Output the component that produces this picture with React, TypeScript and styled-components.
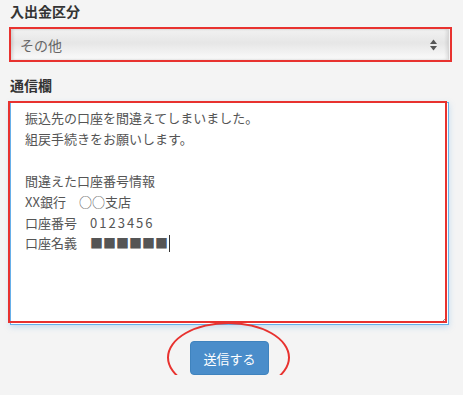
import React from "react";
import styled, { createGlobalStyle } from "styled-components";

const red = "#e8322f";
const font = `"Liberation Sans", Arial, "Noto Sans CJK JP", sans-serif`;
const cjk = `"Noto Sans CJK JP", "Liberation Sans", sans-serif`;

const GlobalStyle = createGlobalStyle`
    html, body {
        margin: 0;
        padding: 0;
        background: #f4f4f4;
    }
    body {
        font-family: ${font};
    }
`;

const Form = styled.form`
    width: 439px;
    padding: 2px 0 0 10px;
`;

const Group = styled.div<{ gap: number }>`
    position: relative;
    margin-bottom: ${p => p.gap}px;
`;

const Label = styled.label`
    display: block;
    font-size: 14px;
    line-height: 20px;
    font-weight: bold;
    color: #333;
    margin-bottom: 6px;
`;

const SelectBox = styled.div`
    position: relative;
    height: 33px;
    box-sizing: border-box;
    border: 1px solid #d6d6d6;
    border-radius: 2px;
    background: linear-gradient(#f2f2f2, #e6e6e6 45%, #fbfbfb);
    box-shadow: inset 2px 0 3px rgba(0, 0, 0, 0.12),
        inset -2px 0 3px rgba(0, 0, 0, 0.08);
    display: flex;
    align-items: center;
    padding: 0 10px 0 9px;
`;

const SelectText = styled.span`
    flex: 1;
    font-size: 14px;
    color: #666;
`;

const Arrows = styled.svg`
    width: 7px;
    height: 12px;
    margin-right: 1px;
`;

const TextArea = styled.div`
    box-sizing: border-box;
    height: 223px;
    background: #fff;
    border: 1px solid #66afe9;
    box-shadow: 0 2px 6px rgba(102, 175, 233, 0.35);
    padding: 5px 14px;
    font-family: ${cjk};
    font-size: 13px;
    line-height: 20.9px;
    color: #555;
    white-space: pre;
    position: relative;
`;

const Digits = styled.span`
    letter-spacing: 2px;
`;

const Caret = styled.span`
    display: inline-block;
    width: 1px;
    height: 17px;
    margin-left: 1px;
    background: #333;
    vertical-align: -4px;
`;

const Grip = styled.svg`
    position: absolute;
    right: 1px;
    bottom: 1px;
    width: 6px;
    height: 6px;
`;

const Mark = styled.span<{ l: number; t: number; r: number; b: number }>`
    position: absolute;
    left: ${p => p.l}px;
    top: ${p => p.t}px;
    right: ${p => p.r}px;
    bottom: ${p => p.b}px;
    border: 2px solid ${red};
    pointer-events: none;
`;

const Actions = styled.div`
    position: relative;
    display: flex;
    justify-content: center;
    padding-top: 16px;
`;

const Button = styled.button`
    width: 79px;
    height: 34px;
    border: 1px solid #3f83be;
    border-radius: 4px;
    background: #4a8dca;
    color: #fff;
    font-family: ${font};
    font-size: 13px;
`;

const Ring = styled.span`
    position: absolute;
    left: 157px;
    top: -3px;
    width: 119px;
    height: 67px;
    border: 2px solid ${red};
    border-radius: 50%;
    pointer-events: none;
`;

export default function App() {
    return (
        <>
            <GlobalStyle />
            <Form>
                <Group gap={15}>
                    <Label>入出金区分</Label>
                    <SelectBox>
                        <SelectText>その他</SelectText>
                        <Arrows viewBox="0 0 7 12">
                            <path d="M3.5 0.5 L7 5 H0 Z" fill="#555" />
                            <path d="M3.5 11.5 L7 7 H0 Z" fill="#555" />
                        </Arrows>
                    </SelectBox>
                    <Mark l={-1} t={25} r={-3} b={-1} />
                </Group>
                <Group gap={0}>
                    <Label>通信欄</Label>
                    <TextArea>
                        {"振込先の口座を間違えてしまいました。\n組戻手続きをお願いします。\n\n間違えた口座番号情報\nXX銀行　○○支店\n口座番号　"}
                        <Digits>0123456</Digits>
                        {"\n口座名義　■■■■■■"}
                        <Caret />
                        <Grip viewBox="0 0 6 6">
                            <path d="M5.5 0.5 L0.5 5.5 M5.5 3 L3 5.5" stroke="#777" strokeWidth="0.8" />
                        </Grip>
                    </TextArea>
                    <Mark l={-2} t={25} r={2} b={2} />
                </Group>
                <Actions>
                    <Button type="button">送信する</Button>
                    <Ring />
                </Actions>
            </Form>
        </>
    );
}
